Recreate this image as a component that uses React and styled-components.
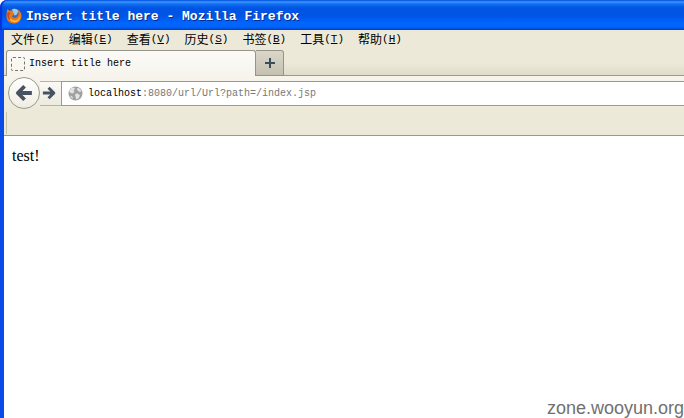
import React from 'react';
import styled, { createGlobalStyle } from 'styled-components';

const GlobalStyle = createGlobalStyle`
  * { box-sizing: border-box; }
  body { margin: 0; background: #fff; }
`;

const mono = '"Liberation Mono", "Noto Sans CJK SC", monospace';

const Window = styled.div`
  min-height: 100vh;
  display: flex;
  flex-direction: column;
  background: #fff;
`;

const TitleBar = styled.header`
  height: 30px;
  display: flex;
  align-items: center;
  gap: 4px;
  padding: 2px 6px 0;
  border-top-left-radius: 7px;
  background: linear-gradient(#0058e0 0, #3c94ff 2px, #1170f0 4px, #0054e3 8px, #0055e5 16px, #0066ff 23px, #0064fb 27px, #003fc4 30px);
  box-shadow: inset 2px 0 1px #0831d9;
`;

const Title = styled.h1`
  margin: 0;
  padding-top: 2px;
  font: bold 13px/18px ${mono};
  color: #fff;
  text-shadow: 1px 1px #0a2a8c;
  white-space: pre;
`;

const Frame = styled.div`
  flex: 1;
  display: flex;
  flex-direction: column;
  border-left: 4px solid #0a4ae8;
`;

const Chrome = styled.div`
  background: #ece9d8;
`;

const MenuBar = styled.nav`
  display: flex;
  gap: 14px;
  height: 20px;
  padding: 0 7px 2px;
`;

const MenuButton = styled.button`
  display: flex;
  align-items: center;
  padding: 0;
  border: 0;
  background: none;
  color: #000;
  font: 12px/18px "Noto Sans CJK SC", sans-serif;
`;

const Shortcut = styled.span`
  font: 11px/18px ${mono};
`;

const TabStrip = styled.div`
  display: flex;
  height: 26px;
  padding-left: 2px;
  background: linear-gradient(#ece9d8 50%, #dedbca);
  box-shadow: inset 0 -1px #9b998c;
`;

const Tab = styled.button`
  display: flex;
  align-items: center;
  gap: 4px;
  width: 250px;
  padding: 0 4px;
  border: 1px solid #96948a;
  border-bottom: 0;
  border-radius: 3px 3px 0 0;
  background: linear-gradient(#fbfaf7, #f6f4ec);
  color: #000;
  font: 10px/16px ${mono};
`;

const BlankIcon = styled.span`
  width: 14px;
  height: 14px;
  border: 1px dashed #77756e;
  border-radius: 2px;
`;

const NewTab = styled.button`
  display: flex;
  align-items: center;
  justify-content: center;
  width: 28px;
  padding: 0;
  border: 1px solid #96948a;
  border-left-width: 0;
  border-radius: 0 3px 0 0;
  background: linear-gradient(#dad7c9, #c4c1b3);
`;

const NavBar = styled.div`
  display: flex;
  align-items: center;
  height: 34px;
  padding-left: 4px;
  background: linear-gradient(#f6f4ec, #ece9d8);
`;

const BackButton = styled.button`
  display: flex;
  align-items: center;
  justify-content: center;
  flex: none;
  width: 32px;
  height: 32px;
  padding: 0;
  border: 1px solid #999890;
  border-radius: 50%;
  background: linear-gradient(#fffffd, #efede2);
`;

const ForwardButton = styled.button`
  display: flex;
  align-items: center;
  justify-content: flex-start;
  flex: none;
  width: 21px;
  height: 25px;
  padding: 0 2px;
  border: solid #b5b3a8;
  border-width: 1px 0;
  background: linear-gradient(#faf9f4, #edeadf);
`;

const AddressBar = styled.div`
  display: flex;
  align-items: center;
  flex: 1;
  min-width: 0;
  height: 25px;
  padding-left: 6px;
  border: solid #9b998e;
  border-width: 1px 0 1px 1px;
  background: #fff;
  font: 10px/16px ${mono};
`;

const Host = styled.label`
  padding: 1px 0 0 5px;
  color: #000;
`;

const AddressInput = styled.input`
  flex: 1;
  min-width: 0;
  padding: 1px 0 0;
  border: 0;
  outline: 0;
  background: none;
  color: #777;
  font: inherit;
`;

const BookmarksBar = styled.div`
  height: 26px;
  padding: 2px 2px 1px;
  border-bottom: 1px solid #9b998c;
`;

const Grip = styled.div`
  width: 1px;
  height: 22px;
  background: #c5c2ae;
`;

const Page = styled.main`
  flex: 1;
  display: flex;
  flex-direction: column;
  justify-content: space-between;
  padding: 11px 0 0 8px;
  color: #000;
  font: 16px/18px "Liberation Serif", serif;
`;

const Text = styled.p`
  margin: 0;
`;

const Watermark = styled.footer`
  align-self: flex-end;
  color: #707070;
  font: 18px/20px "Liberation Sans", sans-serif;
`;

const menus = [
  ['文件', 'F'],
  ['编辑', 'E'],
  ['查看', 'V'],
  ['历史', 'S'],
  ['书签', 'B'],
  ['工具', 'T'],
  ['帮助', 'H'],
];

const FirefoxIcon = () => (
  <svg width="16" height="16" viewBox="0 0 16 16" aria-hidden="true">
    <circle cx="8" cy="7" r="6.5" fill="#356ab0" />
    <path d="M6 1.5C8 .3 11 .5 12.5 3L10.5 7 8.5 7.5 7 5Z" fill="#9ccbed" />
    <path d="M1.5 1 3.5 3C5 2.5 6.5 3 7 4.5L8.5 5.5 7 7 6 8.5C7.5 10.5 10 10 11.5 8.5 12.8 6.5 12.8 4 12 1.5 14.3 3 15.7 5.5 15.5 8.5 15 13 12 15.5 8 15.5 3.5 15.5.5 12.5.5 8.5.4 5.5.8 3 1.5 1Z" fill="#e87819" />
    <path d="M13.5 3.5C15 7 14 10.5 11 12 7.5 13.5 4 11.5 3 8.5 3.5 12.5 6 14.5 9 14.2 13.5 13.8 15.5 9 13.5 3.5Z" fill="#f9c43a" />
    <path d="M1.4 4.5C.8 8 2 11 4 12L3 7 4.5 4.5Z" fill="#c94718" />
  </svg>
);

const ArrowIcon = ({ size, flip }) => (
  <svg width={size} height={size} viewBox="0 0 16 16" aria-hidden="true">
    <path
      d={flip ? 'M1 8H13M7.5 2 13.5 8 7.5 14' : 'M15 8H3M8.5 2 2.5 8 8.5 14'}
      fill="none"
      stroke="#475362"
      strokeWidth="3.4"
      strokeLinejoin="round"
    />
  </svg>
);

const PlusIcon = () => (
  <svg width="12" height="12" viewBox="0 0 12 12" aria-hidden="true">
    <path d="M6 1V11M1 6H11" stroke="#3d4c5b" strokeWidth="2" />
  </svg>
);

const GlobeIcon = () => (
  <svg width="15" height="15" viewBox="0 0 15 15" aria-hidden="true">
    <circle cx="7.5" cy="7.5" r="7" fill="#a0a0a0" />
    <path d="M1 5 3.5 2 6 1.5 7 3 5.5 4.5 6.5 6 4.5 7.5 2.5 7ZM8.5 2.5 11 2 13.5 5 12 6 10 5ZM7 8 10 7.5 12 9.5 10.5 12.5 8.5 13.5 7.5 11ZM2 9.5 4.5 10.5 5 13 3 11.5Z" fill="#e3e3e3" />
  </svg>
);

export default function App() {
  return (
    <Window>
      <GlobalStyle />
      <TitleBar>
        <FirefoxIcon />
        <Title>Insert title here - Mozilla Firefox</Title>
      </TitleBar>
      <Frame>
        <Chrome>
          <MenuBar>
            {menus.map(([name, key]) => (
              <MenuButton key={key}>
                {name}
                <Shortcut>(<u>{key}</u>)</Shortcut>
              </MenuButton>
            ))}
          </MenuBar>
          <TabStrip role="tablist">
            <Tab role="tab" aria-selected="true">
              <BlankIcon />
              Insert title here
            </Tab>
            <NewTab aria-label="New tab"><PlusIcon /></NewTab>
          </TabStrip>
          <NavBar>
            <BackButton aria-label="Back"><ArrowIcon size={18} /></BackButton>
            <ForwardButton aria-label="Forward"><ArrowIcon size={14} flip /></ForwardButton>
            <AddressBar>
              <GlobeIcon />
              <Host htmlFor="address">localhost</Host>
              <AddressInput id="address" type="text" defaultValue=":8080/url/Url?path=/index.jsp" spellCheck={false} />
            </AddressBar>
          </NavBar>
          <BookmarksBar><Grip /></BookmarksBar>
        </Chrome>
        <Page>
          <Text>test!</Text>
          <Watermark>zone.wooyun.org</Watermark>
        </Page>
      </Frame>
    </Window>
  );
}
